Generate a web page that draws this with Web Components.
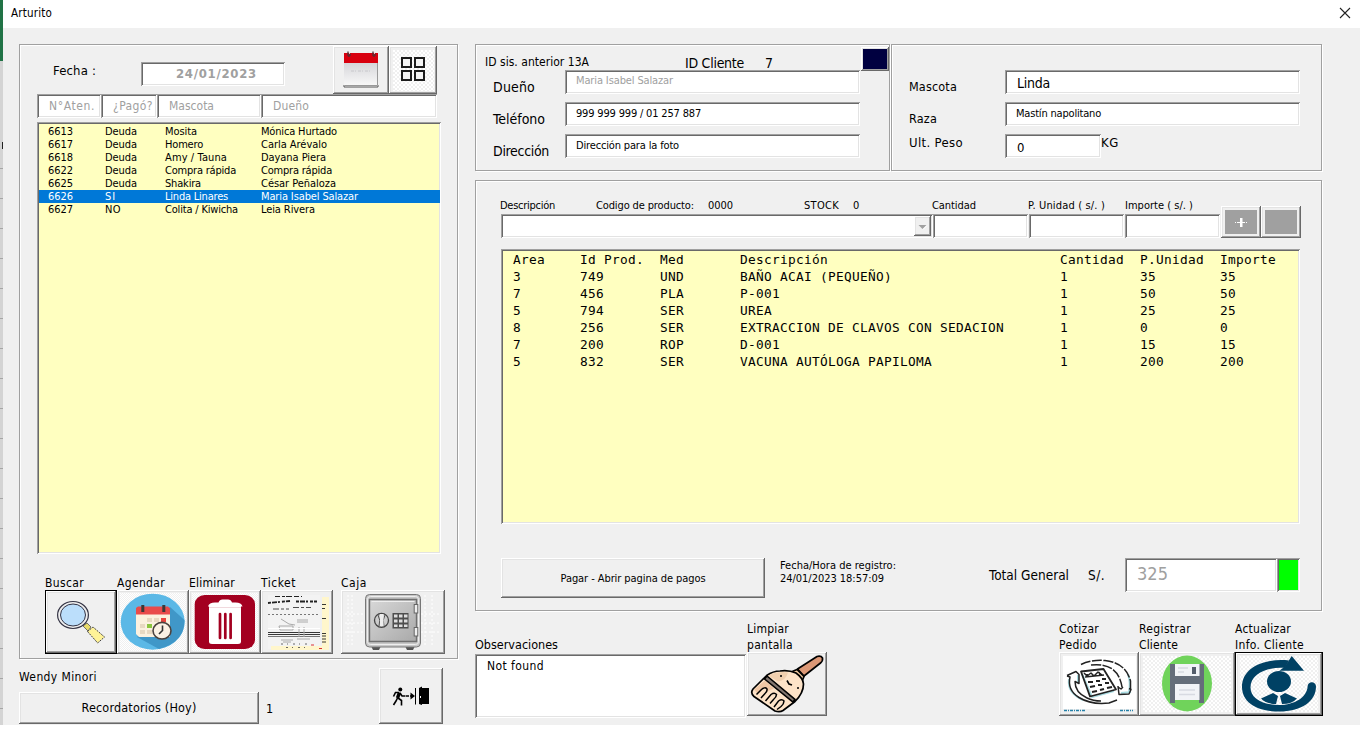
<!DOCTYPE html>
<html lang="es">
<head>
<meta charset="utf-8">
<title>Arturito</title>
<style>
html,body{margin:0;padding:0;width:1364px;height:732px;overflow:hidden;background:#fff}
body{font-family:"DejaVu Sans Condensed","DejaVu Sans",sans-serif;font-size:11px;color:#000}
</style>
</head>
<body>
<arturito-app></arturito-app>

<template id="app">
<style>
:host{display:flex;width:1364px;height:732px;background:#fff}
.edge{width:3px;height:725px;flex:none;background:repeating-linear-gradient(#d4d4d4 0 29px,#a6a6a6 29px 30px);background-position:0 19px;display:flex;flex-direction:column}
.edge i{display:block;flex:none}
.win{flex:1;display:flex;flex-direction:column}
header{height:28px;display:flex;align-items:center;justify-content:space-between;padding:0 12px 2px 8px;box-sizing:border-box;background:#fff}
main{width:1357px;height:697px;background:#f0f0f0;display:grid;grid-template-columns:440px 848px;column-gap:16px;padding:16px 0 0 16px;box-sizing:border-box}
.row{display:flex;align-items:flex-start;flex:none}
.col{display:flex;flex-direction:column;align-items:flex-start;flex:none}
wf-text,wf-field,wf-button,wf-frame,wf-list{flex:none}
</style>
<div class="edge"><i style="height:61px;background:#217346"></i><i style="height:81px;background:#d4d4d4"></i><i style="height:7px;width:1px;margin-left:2px;background:#222"></i></div>
<div class="win">
<header><wf-text w="41" s="11.5">Arturito</wf-text>
<svg width="13" height="13" viewBox="0 0 13 13" stroke="#222" stroke-width="1.1"><path d="M1 1 11 11M11 1 1 11"/></svg></header>
<main>
 <section class="col">
  <wf-frame style="width:439px;height:615px">
   <div class="row" style="height:50px;padding-top:0">
    <wf-text w="43" s="13" style="margin:19px 0 0 34px">Fecha :</wf-text>
    <wf-field dim style="width:144px;height:24px;margin:18px 0 0 45px"><wf-text w="81" s="13" bold style="margin:4px 0 0 35px">24/01/2023</wf-text></wf-field>
    <wf-button icon="calendar" style="width:56px;height:48px;margin:2px 0 0 48px"></wf-button>
    <wf-button icon="tiles" style="width:48px;height:48px;margin-top:2px"></wf-button>
   </div>
   <div class="row" style="margin-left:18px;height:28px">
    <wf-field dim style="width:64px;height:24px"><wf-text w="46" s="12" style="margin:4px 0 0 12px">N°Aten.</wf-text></wf-field>
    <wf-field dim style="width:56px;height:24px"><wf-text w="40" s="12" style="margin:4px 0 0 12px">¿Pagó?</wf-text></wf-field>
    <wf-field dim style="width:104px;height:24px"><wf-text w="45" s="12" style="margin:4px 0 0 12px">Mascota</wf-text></wf-field>
    <wf-field dim style="width:176px;height:24px"><wf-text w="36" s="12" style="margin:4px 0 0 12px">Dueño</wf-text></wf-field>
   </div>
   <wf-list id="visits" style="width:404px;height:432px;margin-left:18px"></wf-list>
   <div class="row" style="margin:21px 0 0 26px">
    <wf-text w="39" s="12" style="margin-right:33px">Buscar</wf-text>
    <wf-text w="48" s="12" style="margin-right:24px">Agendar</wf-text>
    <wf-text w="46" s="12" style="margin-right:26px">Eliminar</wf-text>
    <wf-text w="35" s="12" style="margin-right:45px">Ticket</wf-text>
    <wf-text w="26" s="12">Caja</wf-text>
   </div>
   <div class="row" style="margin:-1px 0 0 26px">
    <wf-button focus icon="search" style="width:72px;height:64px"></wf-button>
    <wf-button icon="agenda" style="width:72px;height:64px"></wf-button>
    <wf-button icon="trash" style="width:72px;height:64px"></wf-button>
    <wf-button icon="ticket" style="width:72px;height:64px"></wf-button>
    <wf-button icon="safe" style="width:104px;height:64px;margin-left:8px"></wf-button>
   </div>
  </wf-frame>
  <div class="row" style="margin-top:9px">
   <div class="col" style="width:240px"><wf-text w="78" s="12" style="margin-top:1px">Wendy Minori</wf-text>
    <wf-button style="width:240px;height:32px;margin-top:7px"><wf-text w="115" s="12.5">Recordatorios (Hoy)</wf-text></wf-button></div>
   <wf-text w="8" s="12.5" style="margin:33px 0 0 7px">1</wf-text>
   <wf-button icon="exit" style="width:64px;height:56px;margin-left:105px"></wf-button>
  </div>
 </section>
 <section class="col">
  <div class="row" style="height:136px">
   <wf-frame style="width:415px;height:127px;margin-right:1px">
    <div class="row" style="height:26px">
     <wf-text w="104" s="12" style="margin:10px 0 0 10px">ID sis. anterior 13A</wf-text>
     <wf-text w="59" s="14" style="margin:11px 0 0 96px">ID Cliente</wf-text>
     <wf-text w="9" s="14" style="margin:11px 0 0 21px">7</wf-text>
     <wf-button style="width:28px;height:24px;margin:3px 0 0 87px;--face:#000040"></wf-button>
    </div>
    <div class="row" style="height:32px"><wf-text w="42" s="14" style="margin:9px 30px 0 18px">Dueño</wf-text><wf-field dim style="width:295px;height:24px"><wf-text w="97" s="11" style="margin:3px 0 0 11px">Maria Isabel Salazar</wf-text></wf-field></div>
    <div class="row" style="height:32px"><wf-text w="52" s="14" style="margin:9px 20px 0 18px">Teléfono</wf-text><wf-field style="width:295px;height:24px"><wf-text w="125" s="11" style="margin:4px 0 0 11px">999 999 999 / 01 257 887</wf-text></wf-field></div>
    <div class="row" style="height:32px"><wf-text w="56" s="14" style="margin:9px 16px 0 18px">Dirección</wf-text><wf-field style="width:295px;height:24px"><wf-text w="103" s="11" style="margin:4px 0 0 11px">Dirección para la foto</wf-text></wf-field></div>
   </wf-frame>
   <wf-frame style="width:431px;height:127px">
    <div class="row" style="height:32px;margin-top:26px"><wf-text w="48" s="12.5" style="margin:9px 48px 0 18px">Mascota</wf-text><wf-field style="width:295px;height:24px"><wf-text w="33" s="14" style="margin:5px 0 0 12px">Linda</wf-text></wf-field></div>
    <div class="row" style="height:32px"><wf-text w="28" s="12.5" style="margin:9px 68px 0 18px">Raza</wf-text><wf-field style="width:295px;height:24px"><wf-text w="85" s="11" style="margin:4px 0 0 11px">Mastín napolitano</wf-text></wf-field></div>
    <div class="row" style="height:32px"><wf-text w="54" s="13" style="margin:1px 42px 0 18px">Ult. Peso</wf-text><wf-field style="width:96px;height:24px"><wf-text w="9" s="13" style="margin:6px 0 0 12px">0</wf-text></wf-field><wf-text w="18" s="13" style="margin-top:1px">KG</wf-text></div>
   </wf-frame>
  </div>
  <wf-frame style="width:847px;height:431px">
   <div class="row" style="height:58px">
    <div class="col">
     <div class="row" style="margin:18px 0 0 25px;height:16px">
      <wf-text w="55" style="margin-right:41px">Descripción</wf-text>
      <wf-text w="98" style="margin-right:14px">Codigo de producto:</wf-text>
      <wf-text w="25" style="margin-right:71px">0000</wf-text>
      <wf-text w="35" style="margin-right:14px">STOCK</wf-text>
      <wf-text w="7" style="margin-right:72px">0</wf-text>
      <wf-text w="44" style="margin-right:52px">Cantidad</wf-text>
      <wf-text w="77" style="margin-right:20px">P. Unidad ( s/. )</wf-text>
      <wf-text w="68">Importe ( s/. )</wf-text>
     </div>
     <div class="row" style="margin-left:26px">
      <wf-field style="width:432px;height:24px;--justify:flex-end"><wf-button icon="drop" style="width:17px;height:20px;margin:2px"></wf-button></wf-field>
      <wf-field style="width:95px;height:24px;margin-right:1px"></wf-field>
      <wf-field style="width:95px;height:24px;margin-right:1px"></wf-field>
      <wf-field style="width:95px;height:24px;margin-right:1px"></wf-field>
     </div>
    </div>
    <wf-button icon="plus" style="width:40px;height:32px;margin:26px 0 0 0"></wf-button>
    <wf-button icon="blank" style="width:40px;height:32px;margin:26px 0 0 0"></wf-button>
   </div>
   <wf-list mono id="items" style="width:799px;height:275px;margin:11px 0 0 26px"></wf-list>
   <div class="row" style="margin:34px 0 0 26px">
    <wf-button style="width:264px;height:40px"><wf-text w="145" style="margin-top:1px">Pagar - Abrir pagina de pagos</wf-text></wf-button>
    <div class="col" style="margin-left:15px;width:117px"><wf-text w="116" style="height:13px">Fecha/Hora de registro:</wf-text><wf-text w="104">24/01/2023 18:57:09</wf-text></div>
    <wf-text w="80" s="13.5" style="margin:9px 0 0 92px">Total General</wf-text>
    <wf-text w="17" s="13.5" style="margin:9px 0 0 19px">S/.</wf-text>
    <wf-field dim style="width:152px;height:34px;margin-left:20px"><wf-text w="31" s="18" style="margin:8px 0 0 12px">325</wf-text></wf-field>
    <wf-field style="width:23px;height:34px;--paper:#0f0"></wf-field>
   </div>
  </wf-frame>
  <div class="row" style="margin-top:10px">
   <div class="col" style="width:272px"><wf-text w="83" s="12.5" style="margin-top:16px">Observaciones</wf-text>
    <wf-field style="width:271px;height:64px;margin-top:1px"><wf-text w="57" s="12" style="margin:4px 0 0 12px">Not found</wf-text></wf-field></div>
   <div class="col" style="width:312px"><wf-text w="42" s="12">Limpiar</wf-text><wf-text w="46" s="12">pantalla</wf-text><wf-button icon="brush" style="width:80px;height:64px;margin-top:-1px"></wf-button></div>
   <div class="col" style="width:80px"><wf-text w="40" s="12">Cotizar</wf-text><wf-text w="38" s="12">Pedido</wf-text><wf-button icon="quote" style="width:80px;height:64px;margin-top:-1px"></wf-button></div>
   <div class="col" style="width:96px"><wf-text w="52" s="12">Registrar</wf-text><wf-text w="39" s="12">Cliente</wf-text><wf-button icon="save" style="width:96px;height:64px;margin-top:-1px"></wf-button></div>
   <div class="col" style="width:88px"><wf-text w="56" s="12">Actualizar</wf-text><wf-text w="69" s="12">Info. Cliente</wf-text><wf-button focus icon="refresh" style="width:88px;height:64px;margin-top:-1px"></wf-button></div>
  </div>
 </section>
</main>
</div>
</template>

<script>
const checker = (id, c = '#fff', s = 2) => `<defs><pattern id="${id}" width="${s*2}" height="${s*2}" patternUnits="userSpaceOnUse"><path d="M0 0h${s}v${s}h-${s}zM${s} ${s}h${s}v${s}h-${s}z" fill="${c}"/></pattern></defs>`;
const ICONS = {
calendar:[56,48,`<defs><linearGradient id="g" x2="0" y2="1"><stop stop-color="#d6d6da"/><stop offset="1" stop-color="#fafafa"/></linearGradient></defs>
<path d="M11 17h34v24H11z" fill="url(#g)"/><path d="M11 7h34v10H11z" fill="#d8000f"/><path d="M18 25h20" stroke="#c8c8cc" stroke-dasharray="3 1 1 2"/><path d="M11 39v2h34v-2" fill="none" stroke="#555"/><path d="M12 39.5h32M44.5 17v22" stroke="#999"/><path d="M15 5.500v4q1 1.500 2 0v-2M40 5.500v4q1 1.500 2 0v-2" fill="none" stroke="#4b3438" stroke-width="1.300"/><path d="M16.500 5v3M41.500 5v3" stroke="#eee" stroke-width=".8"/>`],
tiles:[48,48,checker('c')+`<path d="M4 4h41v41H4z" fill="url(#c)"/><g fill="#f4f4f4" stroke="#1c1c1c" stroke-width="2"><path d="M13 12h9v9h-9zM26 12h9v9h-9zM13 25h9v9h-9zM26 25h9v9h-9z"/></g>`],
search:[72,64,`<path d="M38 36l4-3 4 4-3 4z" fill="#e9dc6a" stroke="#555" stroke-width=".8"/><path d="M42.500 41.500 48 37 59.500 47 52.700 53z" fill="#fff397" stroke="#444" stroke-width="1" stroke-dasharray="2 1"/><ellipse cx="28" cy="25" rx="15.400" ry="13.500" fill="#eee" stroke="#334" stroke-width="1.200"/><ellipse cx="28" cy="25" rx="12.500" ry="11" fill="#bbdefb" stroke="#334" stroke-width="1"/>`],
agenda:[72,64,checker('c','#fff',1)+`<path d="M3 3h66v58H3z" fill="url(#c)"/><ellipse cx="35.700" cy="31.700" rx="32" ry="28" fill="#5bb8e6"/><path d="M53 17 67.500 30Q68 52 42 59L20 47z" fill="#4097c8"/><path d="M19 22h34v25H22l-3-3z" fill="#fbf1df"/><path d="M19 24.500V18l2-1.500h30l2 2v6z" fill="#e94b4b"/><path d="M24.300 15h3v7h-3zM45.300 15h3v7h-3z" fill="#3b3838"/><path d="M30 28h5v4h-5zM37 28h5v4h-5zM23 34h5v4h-5zM23 40h5v4h-5zM30 40h5v4h-5z" fill="#e8d9c2"/><path d="M44 28h5v4h-5z" fill="#e8443e"/><path d="M30 34h5v4h-5z" fill="#8bc540"/><ellipse cx="45" cy="40.700" rx="9" ry="8.300" fill="#fbf1e4" stroke="#4b423e" stroke-width="1.600"/><path d="M45.500 35.500v5L42 44" fill="none" stroke="#333" stroke-width="1.600"/>`],
trash:[72,64,checker('c','#fff',1)+`<path d="M3 3h66v58H3z" fill="url(#c)"/><rect x="5.700" y="5" width="60.300" height="54" rx="10" ry="9" fill="#a30020"/><path d="M19 16.500q1-4 7-4h3.500q1-3 4-3h5.500q3 0 4 3h3.500q6 0 7 4h-1.500v35q0 2.500-3 2.500H23q-3 0-3-2.500v-35z" fill="#fff"/><path d="M20 17.500h32" stroke="#e9c8ce" stroke-width=".7"/><path d="M31 24v24M36.300 24v24M41.600 24v24" stroke="#a30020" stroke-width="2.700" stroke-linecap="round"/>`],
ticket:[72,64,`<path d="M7 5h52v54H7z" fill="#f3f3f3"/><path d="M61 7h7v53H10v-4h51z" fill="#fff6cc"/><g fill="none" stroke="#222"><path d="M14 6.500h27" stroke-dasharray="5 2 3 1 6 2"/><path d="M7 13l22-2M35 11.500h21" stroke-width="1.800" stroke-dasharray="3 1 5 1 2 2"/><path d="M12 19h16M32 17.500h18" stroke-dasharray="6 2 3 2" stroke-width=".8"/><path d="M7 24.500h50" stroke="#777" stroke-dasharray="2 2"/><path d="M7 42.500h52M7 44.500h52" stroke-width=".9"/><path d="M7 46.500h52" stroke-width=".6"/><path d="M20 29l8 5 6 1M36 30h11M36 32h11M18 36h14v4H19zM38 37v10M43 37v10M36 49h13M20 50h12M22 52h8" stroke="#aaa"/><path d="M7 38.500h52" stroke="#fff"/><path d="M20 54h30M25 57.500h20" stroke="#444" stroke-width=".8" stroke-dasharray="2 4 1 5"/><path d="M61 14.500h4M61 18.500h3M61 28.500h4M61 43.500h4M61 46h4M61 49h4M61 52h4" stroke-width=".9"/></g><path d="M50 55h3M58 58.500h3" stroke="#d33"/>`],
safe:[104,64,`<defs><linearGradient id="g" x2="1" y2="1"><stop stop-color="#d8d8d8"/><stop offset="1" stop-color="#a9a9a9"/></linearGradient></defs><path d="M7 5v52M11 5v52M84 5v52M91 5v52M4 24h21M80 24h20M4 33h21M80 33h20M4 42h21M80 42h20" stroke="#fff" stroke-dasharray="2 2"/><path d="M30 56h10l-2 4h-6zM64 56h10l-2 4h-6z" fill="#555"/><rect x="24.500" y="4.500" width="55" height="52.500" rx="4" fill="#c7c7c7" stroke="#777"/><rect x="26.500" y="6.500" width="51" height="48" rx="3" fill="none" stroke="#eee"/><path d="M28.500 9.500h47v42h-47z" fill="url(#g)" stroke="#707070" stroke-width="1.400"/><path d="M30.500 11.500h43" stroke="#eee"/><rect x="73.200" y="14.500" width="3.600" height="8.500" fill="#eee" stroke="#666"/><rect x="73.200" y="37.500" width="3.600" height="8.500" fill="#eee" stroke="#666"/><ellipse cx="40.500" cy="30.300" rx="7" ry="7" fill="#ccc" stroke="#444" stroke-width="1.300"/><path d="M37 25q3 5 1 11M44 25q-3 5-1 11" fill="none" stroke="#555"/><path d="M39 24h3.500v12H39z" fill="#eee"/><path d="M51.500 23h16v15.500h-16z" fill="#4d4d4d"/><path d="M53 24.500h3.500v3H53zM58 24.500h3.500v3H58zM63 24.500h3.500v3H63zM53 29.500h3.500v3H53zM58 29.500h3.500v3H58zM63 29.500h3.500v3H63zM53 34.500h3.500v2.500H53zM58 34.500h3.500v2.500H58zM63 34.500h3.500v2.500H63z" fill="#ddd"/>`],
exit:[64,56,`<circle cx="21.300" cy="21.500" r="2"/><g fill="none" stroke="#000" stroke-width="2"><path d="M20.500 24.500 18.500 30" stroke-width="3.500"/><path d="M20 24.500h-3.500l-2 4M21 25l2 3h3.500M18.500 30l-1.500 3-2.500 4M19 30l3.500 2.500v5" stroke-width="1.600"/><path d="M27 28h6" stroke-dasharray="3 1" stroke-width="1.500"/></g><path d="M31.500 24.500 36 28l-4.500 3.500z"/><path d="M36.500 20v16.500" stroke="#000"/><path d="M40 20l3-1.500V37l-3-1zM42.500 20H50v16h-7.500z"/><path d="M41 28h1v2h-1z" fill="#fff"/>`],
drop:[17,20,`<path d="M4.500 9h8l-4 4z" fill="#a0a0a0"/><path d="M9 13.500l4-4" stroke="#fff"/>`],
plus:[40,32,`<path d="M4 4h32v24H4z" fill="#a0a0a0"/><path d="M14 16.500h12" stroke="#fff" stroke-dasharray="1 1 2 0 4 0 2 1 1 1"/><path d="M19 12h2.500v9H19z" fill="#fff"/>`],
blank:[40,32,`<path d="M4 4h32v24H4z" fill="#a0a0a0"/>`],
brush:[80,64,`<g stroke="#000" stroke-width="1.700" stroke-linejoin="round"><path d="M50.500 17 70 4.500q4-1 5.500 1.500 .5 3-2 5L57 24z" fill="#dc9876"/><path d="M44 20l6-2.500 7 7-2 5z" fill="#f0c9a0"/><path d="M19.700 23.500Q26 19 33 19q8-1.500 16 2 7 5 7.500 11 0 9-8.500 17.500L36 58.500q-3 2-8 .5L7 44.500Q3 41 6 37z" fill="#fde3c8"/></g><path d="M21 23.500q10-5 20-3-2 8-10 9z" fill="#f0cfae"/><path d="M7 37.500l11-9 9 8-7 3-8 4z" fill="#efc7a5"/><path d="M20 24 48 47.300 46 50 17.500 27z" fill="#82766f" stroke="#000" stroke-width="1.600"/><g fill="#fde3c8" stroke="#000" stroke-width="1.500"><path d="M9.500 42.500l5-5q3.500-3 5.500-.5 .5 2.500-2 4.500L14 46M18.500 49l5.500-6.500q3.500-2.500 5.500 0 0 2.500-3 5L23 51.500M27 55l4.500-6q3.500-2.500 5.500 0 0 3-3 5.500L30 57.500"/></g><path d="M40 28.500l2 3.500 3 1M33 24h2M50 36h2" fill="none" stroke="#000" stroke-width="1.600"/>`],
quote:[80,64,`<path d="M4 4h73v53H4z" fill="#fff"/><path d="M5 58.500h22M61 58.500h13" stroke="#2480a8" stroke-width="1.500" stroke-dasharray="3 1 1 1"/><g stroke="#a9dce2" stroke-width="2" fill="none"><path d="M10 27q-2 14 14 21M69 22q3 10 1 18M23 22l10 23 22-6M19 23v8M62 41l10-1"/></g><g fill="none" stroke="#222" stroke-width="1.500" stroke-linejoin="round"><path d="M22 19.500 44.500 17 57 37.500 31 44.500z" stroke-width="1.800"/><path d="M25 21l3 3 4-3 3 3 4-4 4 3M26 25l19-2M28 22v3M40 20l1 4"/><path d="M29 30h5M37 29h4M43 27h4M31 35l5-1M39 33h4M46 31h4M33 40l5-1M41 38l4-1M48 36l5-1" stroke-width="2.200"/><path d="M22 12.500q10-5 24-4Q67 11 71.500 29v8M32 13q27-3 31 22" stroke-dasharray="10 1.500"/><path d="M8 23.500l9-4 3 3v9l-4-2q0 11 12 16.500 6 3 14 3M8 24l3 1q-3 13 9 20.500T50 51l8-3" /><path d="M59 34l1 8.500 10-.5 2-4.500-2-1M59 35l3 2 2-2"/></g>`],
save:[96,64,checker('c')+`<path d="M4 4h88v56H4z" fill="url(#c)"/><ellipse cx="48" cy="31.500" rx="25" ry="28" fill="#70d35b"/><path d="M31 12h34v39h-5V32H36v19h-5z" fill="#656d7a"/><path d="M36 12h24.500v12H36zM36 32h24.500v16H36z" fill="#f2f3f7"/><path d="M53 15h4v7h-4z" fill="#555d6b"/><path d="M39 16h10M39 20h6M40 38h16M40 42.500h16" stroke="#d8dae2" stroke-width="1.300"/>`],
refresh:[88,64,checker('c')+`<path d="M5 4h78v56H5z" fill="url(#c)"/><g fill="#004164"><path d="M54 8.500C30 6 7 15 7 35c0 16 16 24.500 37 24.500 22 0 37-10 37-25a4.200 4.200 0 0 0-8.400 0C72 45 60 53 44 53 27 53 15.500 46 15.500 35.500 15.500 22 32 14.500 50 16z"/><path d="M56.700 4 69 18.700H44.300L50 14.500z"/><ellipse cx="44" cy="29.500" rx="12" ry="10.500"/><path d="M26 46.500l12-5.500 5 3-2 8q-10 0-15-5.500zM62 46.500 50 41l-5 3 2 8q10 0 15-5.500z"/></g>`]
};
class Base extends HTMLElement{
  constructor(){super();this.attachShadow({mode:'open'});}
  paint(html){this.shadowRoot.innerHTML=html;}
}
/* Single-line caption whose tracking is adjusted to fill its declared width. */
customElements.define('wf-text',class extends Base{
  connectedCallback(){
    const w=+this.getAttribute('w'),s=this.getAttribute('s')||11;
    this.paint(`<style>:host{display:block;width:${w}px;height:16px;line-height:16px;font-size:${s}px;white-space:pre;${this.hasAttribute('bold')?'font-weight:bold;':''}}</style><span><slot></slot></span>`);
    const n=this.textContent.length,real=this.shadowRoot.querySelector('span').getBoundingClientRect().width;
    if(n>1&&w)this.style.letterSpacing=((w-real)/n).toFixed(3)+'px';
  }
});
customElements.define('wf-frame',class extends Base{
  connectedCallback(){this.paint(`<style>:host{display:flex;flex-direction:column;align-items:flex-start;box-shadow:inset 0 0 0 1px #a0a0a0,inset 2px 2px #fff,1px 1px #fff}</style><slot></slot>`);}
});
const SUNK='inset 1px 1px #a0a0a0,inset -1px -1px #fff,inset 2px 2px #696969,inset -2px -2px #e3e3e3';
customElements.define('wf-field',class extends Base{
  connectedCallback(){this.paint(`<style>:host{display:flex;align-items:flex-start;justify-content:var(--justify,flex-start);box-sizing:border-box;background:var(--paper,#fff);box-shadow:${SUNK}}:host([dim]){color:#a0a0a0}</style><slot></slot>`);}
});
customElements.define('wf-button',class extends Base{
  connectedCallback(){
    const i=ICONS[this.getAttribute('icon')];
    this.paint(`<style>:host{display:flex;align-items:center;justify-content:center;box-sizing:border-box;background:var(--face,#f0f0f0);box-shadow:inset -1px -1px #696969,inset 1px 1px #fff,inset -2px -2px #a0a0a0,inset 2px 2px #e3e3e3}
    :host([focus]){box-shadow:inset 0 0 0 1px #000,inset -2px -2px #696969,inset 2px 2px #fff,inset -3px -3px #a0a0a0,inset 3px 3px #e3e3e3}svg{display:block;flex:none}</style>${i?`<svg width="${i[0]}" height="${i[1]}" viewBox="0 0 ${i[0]} ${i[1]}">${i[2]}</svg>`:'<slot></slot>'}`);
  }
});
customElements.define('wf-list',class extends Base{
  set data({cols,rows,selected}){
    const mono=this.hasAttribute('mono'),h=mono?17:13;
    this.paint(`<style>:host{display:block;box-sizing:border-box;background:#ffffc0;padding:${mono?'2px':'3px'} 1px 0 2px;box-shadow:${SUNK}}
    .r{display:grid;grid-template-columns:${cols};height:${h}px;line-height:${h}px;align-items:center;padding-left:${mono?10:9}px;${mono?'font-family:"DejaVu Sans Mono",monospace;font-size:12.8px;letter-spacing:.294px':''}}
    .sel{background:#0078d7;color:#fff}span{white-space:pre}wf-text{height:${h}px;line-height:${h}px}</style>`+
    rows.map((r,i)=>`<div class="r${i===selected?' sel':''}">`+r.map(c=>mono?`<span>${c}</span>`:`<wf-text w="${c[1]}">${c[0]}</wf-text>`).join('')+'</div>').join(''));
  }
});
customElements.define('arturito-app',class extends Base{
  connectedCallback(){
    this.shadowRoot.append(document.importNode(document.getElementById('app').content,true));
    const D=['Deuda',32];
    this.shadowRoot.getElementById('visits').data={cols:'57px 60px 96px 1fr',selected:5,rows:[
      [['6613',25],D,['Mosita',32],['Mónica Hurtado',76]],
      [['6617',25],D,['Homero',38],['Carla Arévalo',66]],
      [['6618',25],D,['Amy / Tauna',62],['Dayana Piera',65]],
      [['6622',25],D,['Compra rápida',71],['Compra rápida',71]],
      [['6625',25],D,['Shakira',36],['César Peñaloza',75]],
      [['6626',25],['SI',11],['Linda Linares',63],['Maria Isabel Salazar',97]],
      [['6627',25],['NO',16],['Colita / Kiwicha',73],['Leia Rivera',54]]]};
    this.shadowRoot.getElementById('items').data={cols:'67px 80px 80px 320px 80px 80px 1fr',rows:[
      ['Area','Id Prod.','Med','Descripción','Cantidad','P.Unidad','Importe'],
      ['3','749','UND','BAÑO ACAI (PEQUEÑO)','1','35','35'],
      ['7','456','PLA','P-001','1','50','50'],
      ['5','794','SER','UREA','1','25','25'],
      ['8','256','SER','EXTRACCION DE CLAVOS CON SEDACION','1','0','0'],
      ['7','200','ROP','D-001','1','15','15'],
      ['5','832','SER','VACUNA AUTÓLOGA PAPILOMA','1','200','200']]};
  }
});
</script>
</body>
</html>
